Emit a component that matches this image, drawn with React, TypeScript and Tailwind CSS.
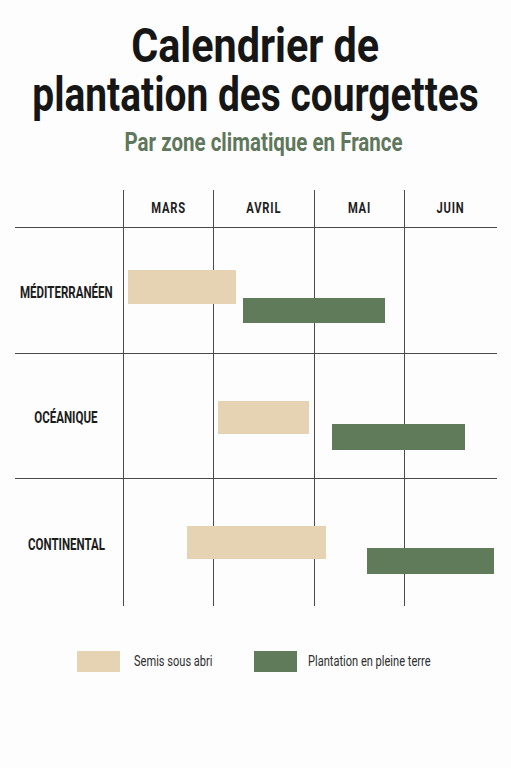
import React from "react";

type Bar = { left: number; top: number; w: number; h: number; kind: "semis" | "plant" };
type Row = { label: string; h: number; bars: Bar[] };

const rows: Row[] = [
  {
    label: "MÉDITERRANÉEN",
    h: 126,
    bars: [
      { left: 113, top: 42, w: 108, h: 34, kind: "semis" },
      { left: 228, top: 70, w: 142, h: 25, kind: "plant" },
    ],
  },
  {
    label: "OCÉANIQUE",
    h: 125,
    bars: [
      { left: 203, top: 47, w: 91, h: 33, kind: "semis" },
      { left: 317, top: 70, w: 133, h: 26, kind: "plant" },
    ],
  },
  {
    label: "CONTINENTAL",
    h: 127,
    bars: [
      { left: 172, top: 47, w: 139, h: 33, kind: "semis" },
      { left: 352, top: 69, w: 127, h: 26, kind: "plant" },
    ],
  },
];

const months = ["MARS", "AVRIL", "MAI", "JUIN"];
const cols = "grid grid-cols-[108px_90px_101px_90px_92px]";

export default function App() {
  return (
    <div className="w-[511px] h-[768px] overflow-hidden bg-[#fdfdfd] text-[#1a1a1a] font-['Roboto','Liberation_Sans',sans-serif]">
      <div className="pt-[21px] flex flex-col items-center">
        <h1 className="flex flex-col items-center text-[48px] leading-[49px] font-bold text-[#161616]">
          <span className="inline-block whitespace-nowrap scale-x-[0.86]">Calendrier de</span>
          <span className="inline-block whitespace-nowrap scale-x-[0.81]">plantation des courgettes</span>
        </h1>
        <p className="mt-[10px] pl-[16px] text-[25px] leading-[28px] font-bold text-[#5f775c]">
          <span className="inline-block whitespace-nowrap scale-x-[0.82]">Par zone climatique en France</span>
        </p>
      </div>

      <div className="mt-[33px] ml-[15px] w-[482px]">
        <div className={`${cols} h-[38px] border-b border-[#4a4a4a]`}>
          <div />
          {months.map((m) => (
            <div
              key={m}
              className="border-l border-[#4a4a4a] flex items-center justify-center text-[14px] font-bold tracking-[1px] text-[#1c1c1c]"
            >
              <span className="inline-block whitespace-nowrap scale-x-[0.8]">{m}</span>
            </div>
          ))}
        </div>
        {rows.map((r, i) => (
          <div
            key={r.label}
            className={`relative ${cols} ${i < rows.length - 1 ? "border-b border-[#4a4a4a]" : ""}`}
            style={{ height: r.h }}
          >
            <div className="flex items-center justify-center pr-[6px] pt-[4px] text-[16px] font-bold text-[#1c1c1c]">
              <span className="inline-block whitespace-nowrap shrink-0 scale-x-[0.72]">{r.label}</span>
            </div>
            <div className="border-l border-[#4a4a4a]" />
            <div className="border-l border-[#4a4a4a]" />
            <div className="border-l border-[#4a4a4a]" />
            <div className="border-l border-[#4a4a4a]" />
            {r.bars.map((b, j) => (
              <div
                key={j}
                className={`absolute ${b.kind === "semis" ? "bg-[#e6d3b4]" : "bg-[#5f7b5a]"}`}
                style={{ left: b.left, top: b.top, width: b.w, height: b.h }}
              />
            ))}
          </div>
        ))}
      </div>

      <div className="mt-[45px] pl-[77px] flex items-center">
        <div className="flex items-center gap-[14px]">
          <div className="w-[43px] h-[21px] bg-[#e6d3b4]" />
          <span className="w-[79px] whitespace-nowrap text-[14px] text-[#2e2e2e]">
            <span className="inline-block origin-left scale-x-[0.79]">Semis sous abri</span>
          </span>
        </div>
        <div className="ml-[41px] flex items-center gap-[11px]">
          <div className="w-[43px] h-[21px] bg-[#5f7b5a]" />
          <span className="w-[123px] whitespace-nowrap text-[14px] text-[#2e2e2e]">
            <span className="inline-block origin-left scale-x-[0.79]">Plantation en pleine terre</span>
          </span>
        </div>
      </div>
    </div>
  );
}
